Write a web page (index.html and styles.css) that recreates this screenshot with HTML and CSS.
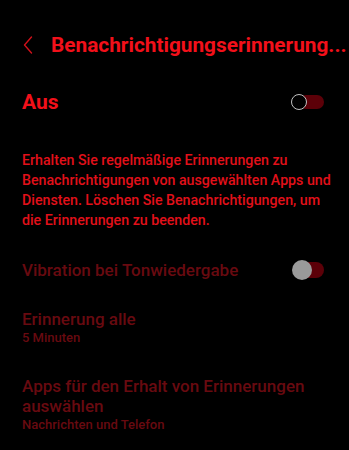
FILE: index.html
```html
<!DOCTYPE html>
<html lang="de">
<head>
<meta charset="utf-8">
<link rel="stylesheet" href="styles.css">
</head>
<body>
<div class="screen">
  <header class="header">
    <svg class="back" width="10" height="18" viewBox="0 0 10 18"><path d="M8.5 1 L1.5 9 L8.5 17" fill="none" stroke="#d0101a" stroke-width="1.4" stroke-linecap="round" stroke-linejoin="round"/></svg>
    <h1 class="title">Benachrichtigungserinnerung...</h1>
  </header>
  <div class="row main-row">
    <span class="main-label">Aus</span>
    <span class="toggle off"><span class="knob"></span></span>
  </div>
  <p class="desc">Erhalten Sie regelmäßige Erinnerungen zu Benachrichtigungen von ausgewählten Apps und Diensten. Löschen Sie Benachrichtigungen, um die Erinnerungen zu beenden.</p>
  <div class="row item-row">
    <span class="item-title">Vibration bei Tonwiedergabe</span>
    <span class="toggle disabled"><span class="knob"></span></span>
  </div>
  <div class="item">
    <div class="item-title">Erinnerung alle</div>
    <div class="item-sub">5 Minuten</div>
  </div>
  <div class="item">
    <div class="item-title">Apps für den Erhalt von Erinnerungen auswählen</div>
    <div class="item-sub">Nachrichten und Telefon</div>
  </div>
</div>
</body>
</html>
```
FILE: styles.css
```css
html, body {
  margin: 0;
  padding: 0;
  background: #000;
}
body {
  font-family: Roboto, "Noto Sans", sans-serif;
  width: 349px;
  height: 450px;
  overflow: hidden;
}
.screen {
  padding: 0 25px 0 22px;
}
.header {
  display: flex;
  align-items: center;
  padding-top: 33px;
  height: 24px;
  margin-left: 1px;
}
.back {
  flex: none;
  margin-right: 18px;
}
.title {
  margin: 0;
  font-size: 20.8px;
  line-height: 24px;
  font-weight: 700;
  color: #f2101a;
  white-space: nowrap;
}
.row {
  display: flex;
  align-items: center;
  justify-content: space-between;
}
.main-row {
  margin-top: 33px;
  height: 24px;
}
.main-label {
  font-size: 21px;
  font-weight: 700;
  line-height: 24px;
  color: #f2101a;
}
.toggle {
  position: relative;
  width: 33px;
  flex: none;
}
.toggle::before {
  content: "";
  position: absolute;
  left: 8px;
  right: 0;
  border-radius: 8px;
  background: #5c0008;
}
.toggle .knob {
  position: absolute;
  left: 0;
  top: 0;
  border-radius: 50%;
  box-sizing: border-box;
}
.toggle.off {
  height: 16px;
}
.toggle.off::before {
  top: 1px;
  height: 14px;
}
.toggle.off .knob {
  width: 16px;
  height: 16px;
  border: 1.5px solid #c0c0c0;
  background: #000;
}
.toggle.disabled {
  height: 20px;
  width: 32px;
}
.toggle.disabled::before {
  left: 9px;
  top: 2px;
  height: 16px;
}
.toggle.disabled .knob {
  width: 20px;
  height: 20px;
  background: #9a9a9a;
}
.desc {
  margin: 36px -12px 0 0;
  font-size: 14.2px;
  line-height: 20px;
  font-weight: 500;
  color: #e2101a;
}
.item-row {
  margin-top: 26px;
  height: 28px;
}
.item-title {
  font-size: 17px;
  line-height: 20px;
  font-weight: 500;
  color: #680a10;
}
.item {
  margin-top: 25px;
}
.item-sub {
  font-size: 13px;
  line-height: 18px;
  font-weight: 500;
  color: #680a10;
}
.item + .item {
  margin-top: 29px;
}
```
